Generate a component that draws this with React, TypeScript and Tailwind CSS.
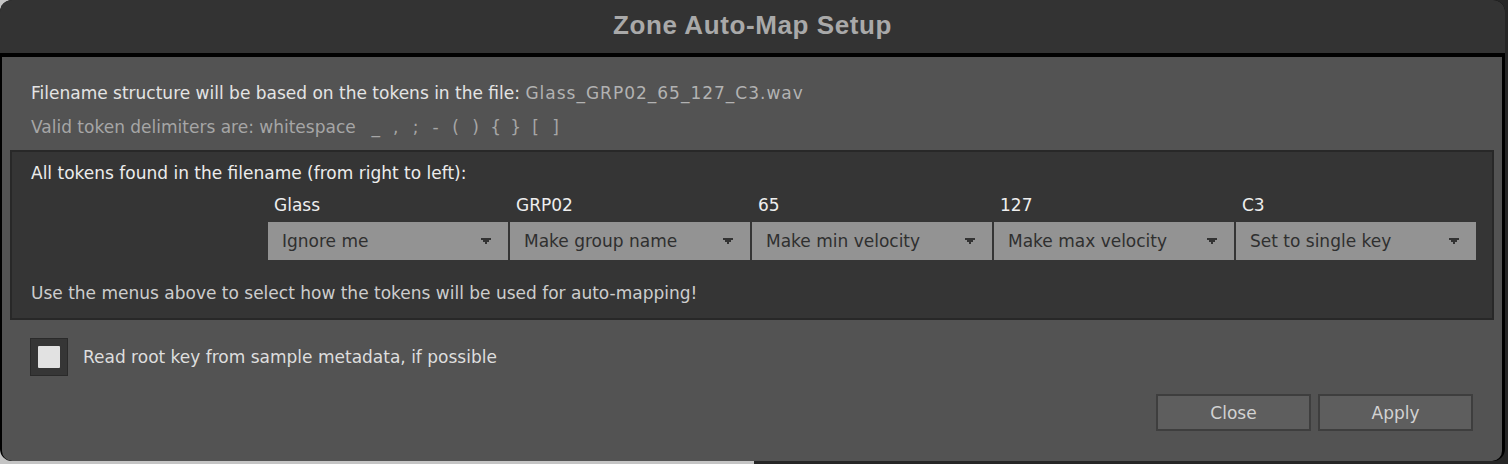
import React from "react";

const tokens = [
    { label: "Glass", action: "Ignore me" },
    { label: "GRP02", action: "Make group name" },
    { label: "65", action: "Make min velocity" },
    { label: "127", action: "Make max velocity" },
    { label: "C3", action: "Set to single key" },
];

const delimiters = ["_", ",", ";", "-", "(", ")", "{", "}", "[", "]"];

function Arrow() {
    return (
        <svg width="10" height="6" viewBox="0 0 10 6" className="shrink-0">
            <path d="M0 0h10v2h-2v2h-2v2h-2v-2h-2v-2h-2z" fill="#333333" />
        </svg>
    );
}

export default function App() {
    const ui = { fontFamily: '"DejaVu Sans", sans-serif' };

    return (
        <div className="w-[1508px] h-[464px] bg-[linear-gradient(to_right,#c4c4c4_50%,#262626_50%)]">
            <div className="w-[1505px] h-[461px] rounded-[12px] overflow-hidden bg-black flex flex-col">
                {/* title bar */}
                <div className="h-[53px] bg-[#333333] flex items-center justify-center pb-[3px]">
                    <span
                        className="text-[26px] font-bold tracking-[0.6px] text-[#a9a9a9]"
                        style={{ fontFamily: '"Liberation Sans", Arial, sans-serif' }}
                    >
                        Zone Auto-Map Setup
                    </span>
                </div>

                {/* body */}
                <div
                    className="mt-[4px] ml-[2px] mr-[3px] flex-1 bg-[#535353] rounded-b-[10px] px-[8px] pt-[26px] flex flex-col text-[17px] leading-[20px]"
                    style={ui}
                >
                    <div className="ml-[21px] text-[#e4e4e4] whitespace-nowrap">
                        Filename structure will be based on the tokens in the file:{" "}
                        <span className="text-[#b2b2b2] tracking-[1px]">Glass_GRP02_65_127_C3.wav</span>
                    </div>
                    <div className="ml-[21px] mt-[14px] text-[#a6a6a6] flex whitespace-nowrap">
                        <span>Valid token delimiters are: whitespace</span>
                        <span className="ml-[10px] flex">
                            {delimiters.map((d) => (
                                <span key={d} className="w-[20px] text-center">
                                    {d}
                                </span>
                            ))}
                        </span>
                    </div>

                    {/* tokens panel */}
                    <div className="mt-[13px] border-2 border-[#282828] bg-[#353535] pt-[11px] pb-[15px] pl-[19px] pr-[14px]">
                        <div className="text-[#ececec]">All tokens found in the filename (from right to left):</div>
                        <div className="mt-[12px] ml-[237px] flex gap-[2px]">
                            {tokens.map((t) => (
                                <div key={t.label} className="w-[240px] shrink-0 flex flex-col">
                                    <div className="pl-[6px] text-[#eeeeee]">{t.label}</div>
                                    <div className="mt-[7px] h-[38px] bg-[#939393] flex items-center justify-between pl-[14px] pr-[17px] text-[#2f2f2f]">
                                        <span>{t.action}</span>
                                        <Arrow />
                                    </div>
                                </div>
                            ))}
                        </div>
                        <div className="mt-[23px] text-[#cdcdcd]">
                            Use the menus above to select how the tokens will be used for auto-mapping!
                        </div>
                    </div>

                    {/* checkbox */}
                    <div className="mt-[18px] ml-[20px] flex items-center">
                        <div className="w-[38px] h-[38px] border border-[#2a2a2a] bg-[#363636] flex items-center justify-center">
                            <div className="w-[22px] h-[22px] bg-[#e2e2e2] rounded-[1px]" />
                        </div>
                        <span className="ml-[15px] text-[#dedede]">Read root key from sample metadata, if possible</span>
                    </div>

                    {/* buttons */}
                    <div className="mt-[18px] mr-[21px] flex justify-end gap-[7px]">
                        <button className="w-[155px] h-[37px] border-2 border-[#3e3e3e] bg-[#5e5e5e] text-[#d2d2d2]">
                            Close
                        </button>
                        <button className="w-[155px] h-[37px] border-2 border-[#3e3e3e] bg-[#5e5e5e] text-[#d2d2d2]">
                            Apply
                        </button>
                    </div>
                </div>
            </div>
        </div>
    );
}
